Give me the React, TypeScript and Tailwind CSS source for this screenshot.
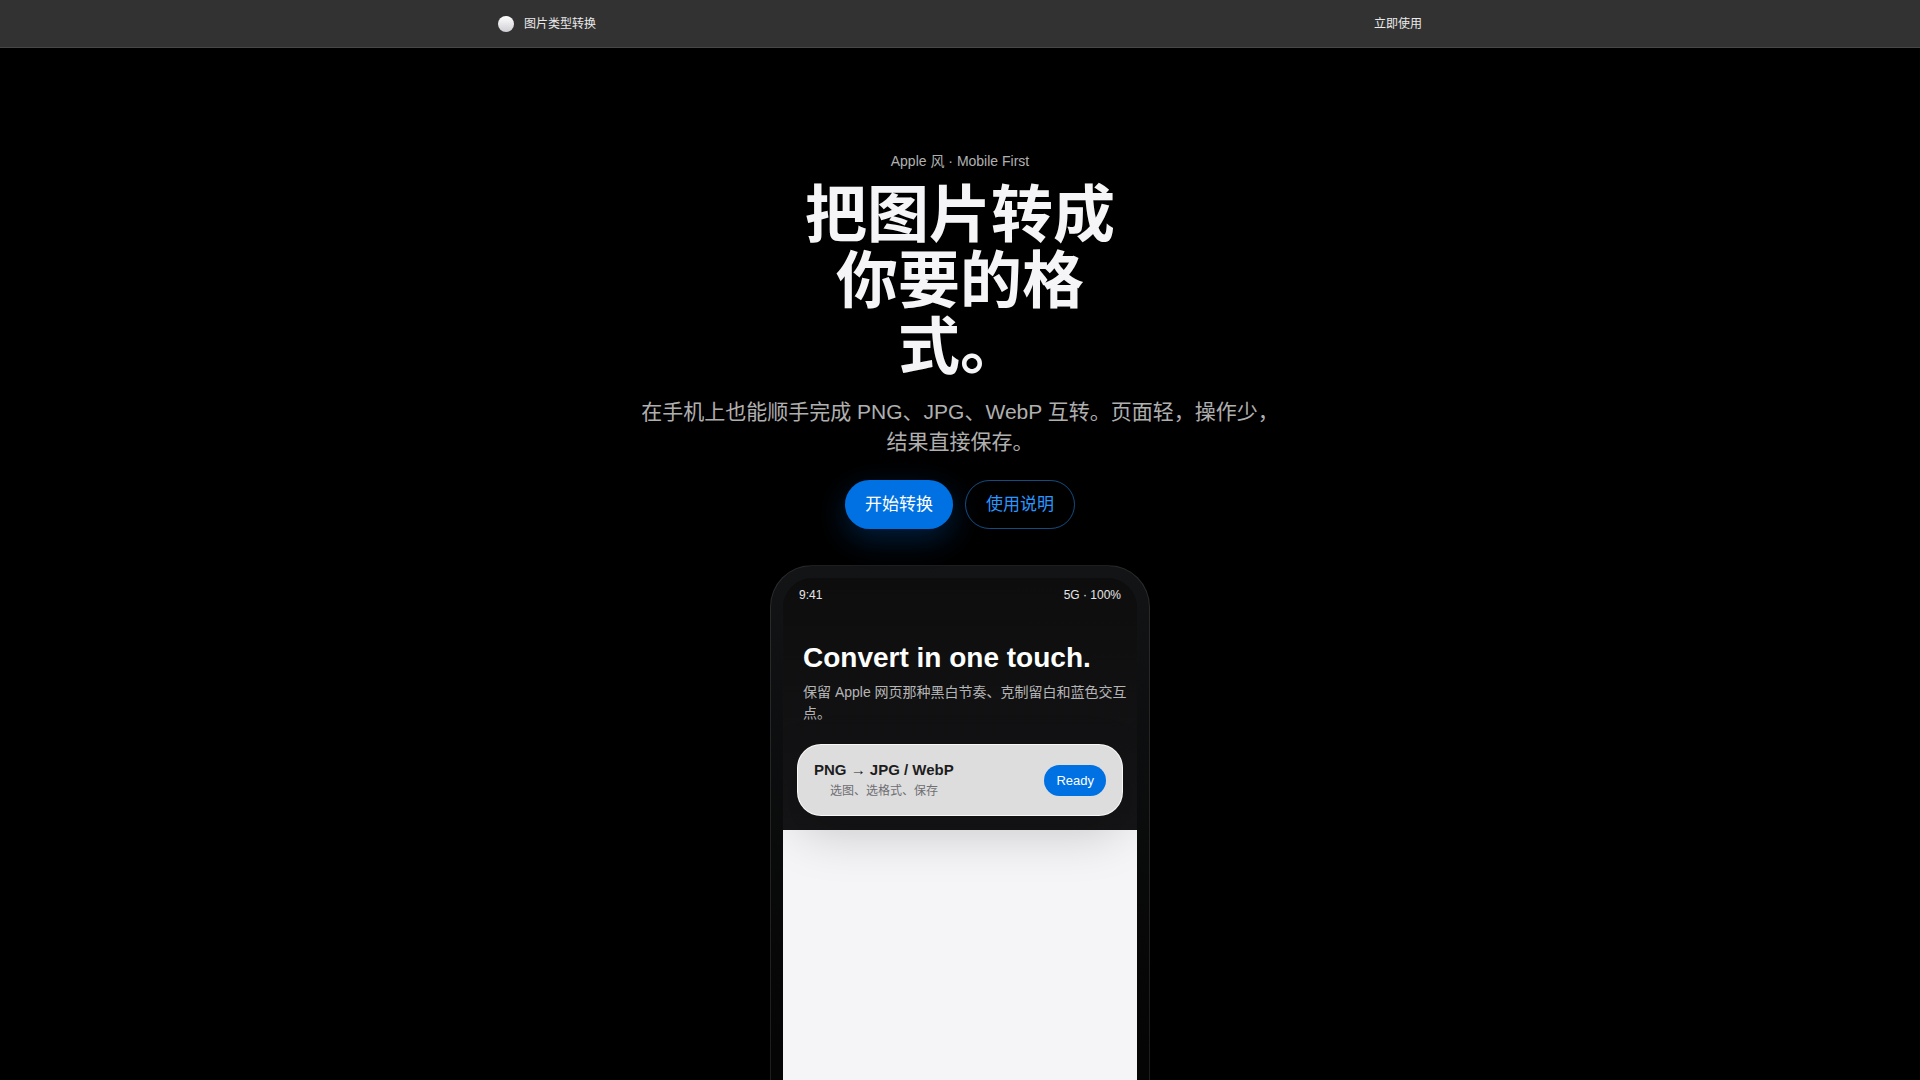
import React from 'react';

const StatusBar = () => (
  <div className="flex justify-between px-4 pt-2 text-xs leading-[18px] text-white/90">
    <span>9:41</span>
    <span>5G · 100%</span>
  </div>
);

const FormatCard = () => (
  <div className="relative mx-3.5 mt-5 flex h-[72px] items-center justify-between rounded-3xl border border-white/80 bg-[#dddddd] px-4 shadow-[0_18px_50px_rgba(0,0,0,0.18)]">
    <div className="text-center">
      <p className="text-[15px] leading-[22px] font-bold text-[#1d1d1f]">PNG → JPG / WebP</p>
      <p className="text-xs leading-5 text-[#6e6e73]">选图、选格式、保存</p>
    </div>
    <span className="rounded-full bg-[#0071e3] px-3 py-1.5 text-[13px] leading-[19px] text-white">
      Ready
    </span>
  </div>
);

const Phone = () => (
  <div className="mx-auto mt-9 w-full max-w-[380px] rounded-[42px] border border-white/10 bg-linear-to-b from-[#121415] to-[#050505] to-65% p-3 text-left">
    <div className="flex min-h-[720px] flex-col overflow-hidden rounded-[30px] bg-[#0d0d0e]">
      <div className="relative z-10 bg-linear-to-b from-[#0d0d0e] to-[#151517] pb-3.5">
        <StatusBar />
        <div className="pt-9 pr-2 pl-5">
          <h2 className="text-[28px] leading-9 font-bold text-white">Convert in one touch.</h2>
          <p className="mt-1.5 text-sm leading-[21px] text-white/70">
            保留 Apple 网页那种黑白节奏、克制留白和蓝色交互点。
          </p>
        </div>
        <FormatCard />
      </div>
      {/* Empty screen area under the dark panel */}
      <div className="flex-1 bg-[#f5f5f7]" />
    </div>
  </div>
);

const App = () => {
  return (
    <div className="h-screen overflow-y-auto bg-black font-['Liberation_Sans','Noto_Sans_CJK_SC',sans-serif] [scrollbar-width:none]">
      {/* Top bar */}
      <header className="border-b border-white/10 bg-[#323232]">
        <nav className="mx-auto flex h-[47px] max-w-[980px] items-center justify-between px-7 text-xs leading-[18px] text-white/90">
          <a href="#top" className="flex items-center gap-2.5">
            <span className="size-4 rounded-full bg-linear-to-b from-white to-[#cfcfd4]" />
            图片类型转换
          </a>
          <a href="#convert">立即使用</a>
        </nav>
      </header>

      {/* Hero */}
      <main className="px-5 pt-[103px] pb-20 text-center">
        <p className="text-sm leading-[21px] text-white/70">Apple 风 · Mobile First</p>
        <h1 className="mx-auto mt-[11px] max-w-[320px] text-[62px] leading-[66px] font-bold text-[#f5f5f7]">
          把图片转成你要的格式。
        </h1>
        <p className="mx-auto mt-4 max-w-[640px] text-[21px] leading-[30px] text-white/70">
          在手机上也能顺手完成 PNG、JPG、WebP 互转。页面轻，操作少，结果直接保存。
        </p>
        <div className="mt-[23px] flex justify-center gap-3 text-[17px] leading-[25px]">
          <button className="rounded-full bg-[#0071e3] px-5 py-3 text-white shadow-[0_10px_30px_rgba(0,113,227,0.28)]">
            开始转换
          </button>
          <button className="rounded-full border border-[#2997ff]/50 px-5 py-[11px] text-[#2997ff]">
            使用说明
          </button>
        </div>
        <Phone />
      </main>
    </div>
  );
};

export default App;
